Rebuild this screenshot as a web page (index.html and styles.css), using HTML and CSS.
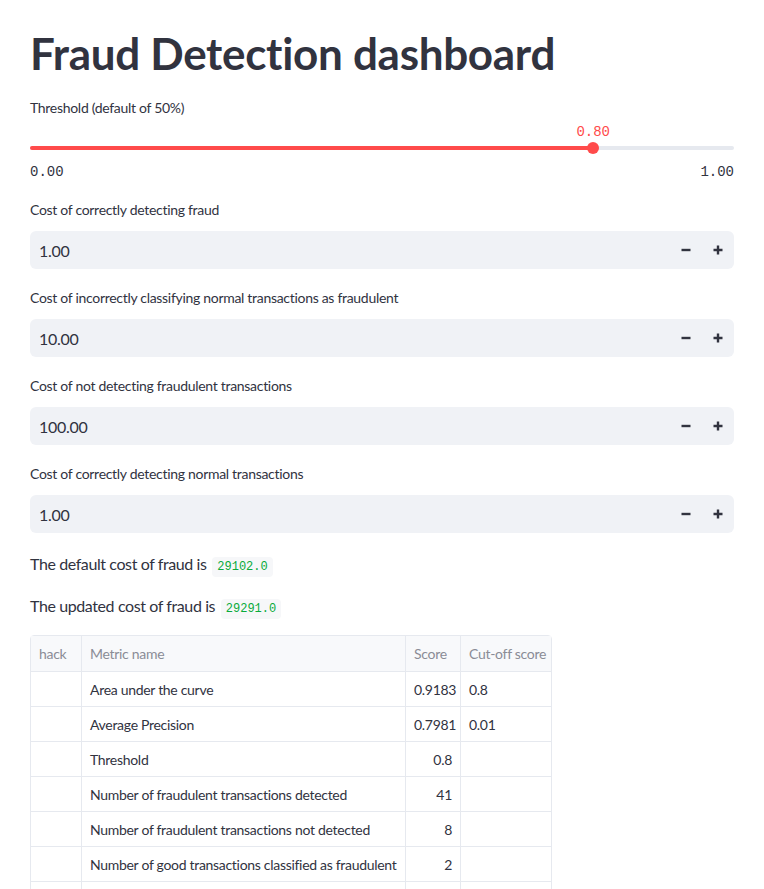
FILE: index.html
```html
<!DOCTYPE html>
<html>
<head>
<meta charset="utf-8">
<link rel="stylesheet" href="styles.css">
</head>
<body>
<main class="main">
  <h1 class="title">Fraud Detection dashboard</h1>

  <div class="slider">
    <div class="label">Threshold (default of 50%)</div>
    <div class="slider-area">
      <div class="slider-value" style="left: 80%">0.80</div>
      <div class="track">
        <div class="track-fill" style="width: 80%"></div>
        <div class="thumb" style="left: 80%"></div>
      </div>
    </div>
    <div class="ticks"><span>0.00</span><span>1.00</span></div>
  </div>

  <div class="num">
    <div class="label">Cost of correctly detecting fraud</div>
    <div class="num-box">
      <span class="num-val">1.00</span>
      <span class="btn"><svg width="10" height="10" viewBox="0 0 10 10"><path d="M0.5 5h9" stroke="#31333F" stroke-width="2.4"/></svg></span>
      <span class="btn"><svg width="10" height="10" viewBox="0 0 10 10"><path d="M0.5 5h9M5 0.5v9" stroke="#31333F" stroke-width="2.4"/></svg></span>
    </div>
  </div>

  <div class="num">
    <div class="label">Cost of incorrectly classifying normal transactions as fraudulent</div>
    <div class="num-box">
      <span class="num-val">10.00</span>
      <span class="btn"><svg width="10" height="10" viewBox="0 0 10 10"><path d="M0.5 5h9" stroke="#31333F" stroke-width="2.4"/></svg></span>
      <span class="btn"><svg width="10" height="10" viewBox="0 0 10 10"><path d="M0.5 5h9M5 0.5v9" stroke="#31333F" stroke-width="2.4"/></svg></span>
    </div>
  </div>

  <div class="num">
    <div class="label">Cost of not detecting fraudulent transactions</div>
    <div class="num-box">
      <span class="num-val">100.00</span>
      <span class="btn"><svg width="10" height="10" viewBox="0 0 10 10"><path d="M0.5 5h9" stroke="#31333F" stroke-width="2.4"/></svg></span>
      <span class="btn"><svg width="10" height="10" viewBox="0 0 10 10"><path d="M0.5 5h9M5 0.5v9" stroke="#31333F" stroke-width="2.4"/></svg></span>
    </div>
  </div>

  <div class="num">
    <div class="label">Cost of correctly detecting normal transactions</div>
    <div class="num-box">
      <span class="num-val">1.00</span>
      <span class="btn"><svg width="10" height="10" viewBox="0 0 10 10"><path d="M0.5 5h9" stroke="#31333F" stroke-width="2.4"/></svg></span>
      <span class="btn"><svg width="10" height="10" viewBox="0 0 10 10"><path d="M0.5 5h9M5 0.5v9" stroke="#31333F" stroke-width="2.4"/></svg></span>
    </div>
  </div>

  <p class="text">The default cost of fraud is <code class="code">29102.0</code></p>
  <p class="text">The updated cost of fraud is <code class="code">29291.0</code></p>

  <table class="table">
    <colgroup>
      <col class="c1"><col class="c2"><col class="c3"><col class="c4">
    </colgroup>
    <thead>
      <tr><th>hack</th><th>Metric name</th><th>Score</th><th>Cut-off score</th></tr>
    </thead>
    <tbody>
      <tr><td></td><td>Area under the curve</td><td class="r">0.9183</td><td>0.8</td></tr>
      <tr><td></td><td>Average Precision</td><td class="r">0.7981</td><td>0.01</td></tr>
      <tr><td></td><td>Threshold</td><td class="r">0.8</td><td></td></tr>
      <tr><td></td><td>Number of fraudulent transactions detected</td><td class="r">41</td><td></td></tr>
      <tr><td></td><td>Number of fraudulent transactions not detected</td><td class="r">8</td><td></td></tr>
      <tr><td></td><td>Number of good transactions classified as fraudulent</td><td class="r">2</td><td></td></tr>
      <tr><td></td><td></td><td class="r"></td><td></td></tr>
    </tbody>
  </table>
</main>
</body>
</html>
```

FILE: styles.css
```css
html, body {
  margin: 0;
  padding: 0;
  background: #ffffff;
}

body {
  font-family: "Lato", "Noto Sans", sans-serif;
  color: #31333F;
}

.main {
  padding: 22px 30px 40px 30px;
  width: 704px;
}

.title {
  font-size: 44px;
  font-weight: 700;
  line-height: 62px;
  margin: 0 0 14px 0;
  letter-spacing: -0.3px;
}

.label {
  font-size: 14px;
  line-height: 20px;
  height: 20px;
  color: #31333F;
  letter-spacing: -0.3px;
}

.slider-area {
  position: relative;
  height: 36px;
}

.slider-value {
  position: absolute;
  top: 4px;
  transform: translateX(-50%);
  font-family: "Liberation Mono", "DejaVu Sans Mono", monospace;
  font-size: 14px;
  line-height: 20px;
  color: #ff4b4b;
}

.track {
  position: absolute;
  left: 0;
  right: 0;
  top: 28px;
  height: 4px;
  border-radius: 2px;
  background: #e6e9ef;
}

.track-fill {
  height: 4px;
  border-radius: 2px;
  background: #ff4b4b;
}

.thumb {
  position: absolute;
  top: -4px;
  width: 12px;
  height: 12px;
  margin-left: -6px;
  border-radius: 50%;
  background: #ff4b4b;
}

.ticks {
  display: flex;
  justify-content: space-between;
  font-family: "Liberation Mono", "DejaVu Sans Mono", monospace;
  font-size: 14px;
  line-height: 20px;
  height: 20px;
  margin-top: 8px;
  color: #31333F;
}

.slider {
  margin-bottom: 18px;
}

.num {
  margin-bottom: 19px;
}

.num-box {
  margin-top: 11px;
  height: 38px;
  background: #f0f2f6;
  border-radius: 6px;
  display: flex;
  align-items: center;
}

.num-val {
  flex: 1;
  padding-left: 9px;
  font-size: 16px;
  letter-spacing: -0.3px;
}

.btn {
  width: 32px;
  height: 38px;
  display: flex;
  align-items: center;
  justify-content: center;
}

.text {
  margin: 0 0 15px 0;
  font-size: 16px;
  line-height: 24px;
  letter-spacing: -0.4px;
}

.code {
  font-family: "Liberation Mono", "DejaVu Sans Mono", monospace;
  font-size: 12px;
  letter-spacing: 0;
  color: #09ab3b;
  background: #f6f7f9;
  border-radius: 4px;
  padding: 3px 5px;
  margin-left: 2px;
}

.table {
  border-collapse: separate;
  border-spacing: 0;
  border: 1px solid #e6e9ef;
  border-radius: 4px;
  font-size: 14px;
  letter-spacing: -0.3px;
  margin-top: -1px;
  table-layout: fixed;
  width: 521px;
}

.c1 { width: 51px; }
.c2 { width: 324px; }
.c3 { width: 55px; }
.c4 { width: 90px; }

.table th,
.table td {
  text-align: left;
  padding: 0 8px;
  height: 34px;
  white-space: nowrap;
  border-right: 1px solid #e6e9ef;
  border-bottom: 1px solid #e6e9ef;
  font-weight: 400;
}

.table th:last-child,
.table td:last-child {
  border-right: none;
}

.table th {
  height: 35px;
  background: #f8f9fb;
  color: #8a8c96;
}

.table td.r {
  text-align: right;
}
```
